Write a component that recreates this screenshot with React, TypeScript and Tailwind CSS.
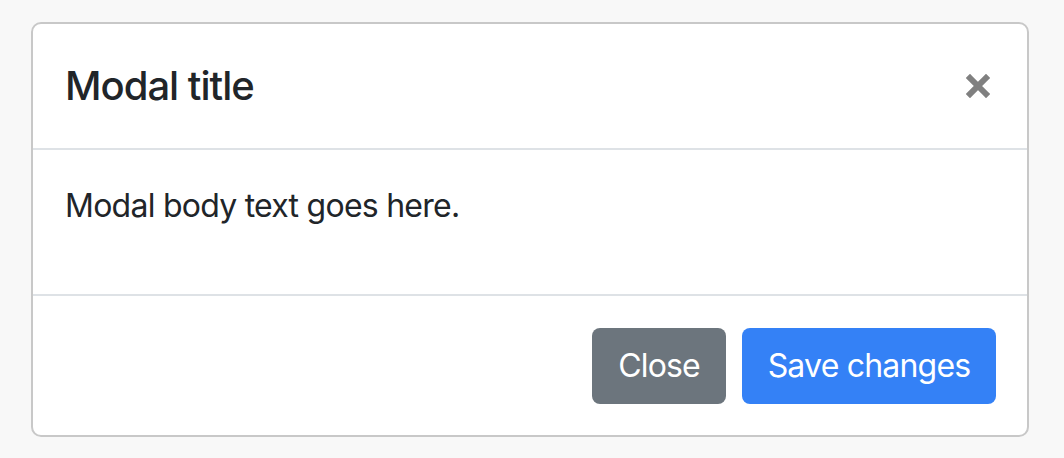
import React from "react";

export default function App() {
  return (
    <div className="w-[1064px] h-[458px] bg-[#f8f8f8] pt-[22px] pl-[31px]" style={{ fontFamily: "Inter, 'Noto Sans', sans-serif" }}>
      <div className="w-[998px] bg-white border-2 border-[#c8c8c8] rounded-[10px] flex flex-col text-[#212529]">
        <div className="flex items-center justify-between px-[32px] py-[32px] border-b-2 border-[#dee2e6]">
          <h5 className="text-[40px] leading-[60px] font-medium tracking-[-1px]">Modal title</h5>
          <svg width="24" height="24" viewBox="0 0 24 24" className="mr-[5px]">
            <path d="M4 4 L20 20 M20 4 L4 20" stroke="#808080" strokeWidth="6" strokeLinecap="square" />
          </svg>
        </div>
        <div className="p-[32px]">
          <p className="text-[32px] leading-[48px] mb-[32px] tracking-[-0.75px]">Modal body text goes here.</p>
        </div>
        <div className="flex justify-end items-center gap-[16px] border-t-2 border-[#dee2e6] pt-[32px] pb-[31px] pr-[31px]">
          <button className="h-[76px] w-[134px] rounded-[8px] bg-[#6c757d] text-white text-[32px] leading-[48px] tracking-[-0.9px]">Close</button>
          <button className="h-[76px] w-[254px] rounded-[8px] bg-[#3481f6] text-white text-[32px] leading-[48px] tracking-[-0.8px]">Save changes</button>
        </div>
      </div>
    </div>
  );
}
